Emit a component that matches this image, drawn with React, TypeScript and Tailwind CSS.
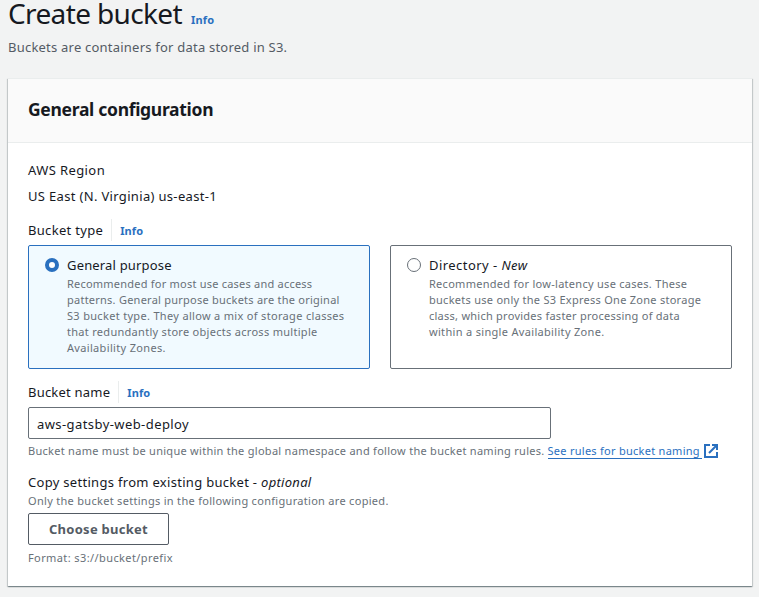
import React from "react";

function Info() {
  return <a className="text-[11px] leading-4 font-bold tracking-[0.15px] text-[#2a70bf]">Info</a>;
}

function Label({ children }: { children: React.ReactNode }) {
  return (
    <div className="flex h-[22px] items-center">
      {children}
      <span className="ml-2 flex h-[22px] items-center border-l border-[#eaeded] pt-0.5 pl-2">
        <Info />
      </span>
    </div>
  );
}

function ExternalIcon() {
  return (
    <svg className="mt-px ml-[2px] size-[14px] shrink-0" viewBox="0 0 14 14" fill="none" stroke="#2a70bf" strokeWidth="2">
      <path d="M6 1H1v12h12V8" />
      <path d="M8 1h5v5M13 1 5 9" />
    </svg>
  );
}

export default function App() {
  return (
    <div className="h-[597px] w-[759px] bg-[#f2f3f3] px-2 font-['Noto_Sans',sans-serif] text-[13px] leading-[22px] text-[#16191f]">
      <header className="h-[78px]">
        <div className="flex h-[30px] items-baseline gap-[9px]">
          <h1 className="text-[28px] leading-[27px] tracking-[-0.63px]">Create bucket</h1>
          <Info />
        </div>
        <p className="mt-[6px] tracking-[0.22px] text-[#545b64]">Buckets are containers for data stored in S3.</p>
      </header>
      <main className="h-[508px] w-[744px] border-t border-[#eaeded] bg-white shadow-[0_1px_1px_0_rgba(0,28,36,0.3),1px_1px_1px_0_rgba(0,28,36,0.15),-1px_1px_1px_0_rgba(0,28,36,0.15)]">
        <div className="flex h-16 items-center border-b border-[#eaeded] bg-[#fafafa] px-5 pb-[3px]">
          <h2 className="text-[17.5px] font-bold tracking-[-0.3px]">General configuration</h2>
        </div>
        <div className="px-5 pt-4">
          <div className="tracking-[0.4px]">AWS Region</div>
          <div className="mt-1 tracking-[0.33px]">US East (N. Virginia) us-east-1</div>
          <div className="mt-3">
            <Label><span className="tracking-[0.31px]">Bucket type</span></Label>
          </div>
          <div className="mt-1 flex gap-5">
            <div className="flex h-[124px] w-[342px] rounded-[2px] border border-[#2a70bf] bg-[#f1faff] px-4 py-2">
              <span className="mt-1 mr-2 size-[14px] shrink-0 rounded-full border-[4px] border-[#2a70bf] bg-white" />
              <div>
                <div className="tracking-[0.17px]">General purpose</div>
                <p className="text-[11px] leading-4 whitespace-nowrap text-[#687078]">
                  <span className="block tracking-[0.22px]">Recommended for most use cases and access</span>
                  <span className="block tracking-[0.24px]">patterns. General purpose buckets are the original</span>
                  <span className="block tracking-[0.32px]">S3 bucket type. They allow a mix of storage classes</span>
                  <span className="block tracking-[0.29px]">that redundantly store objects across multiple</span>
                  <span className="block tracking-[0.33px]">Availability Zones.</span>
                </p>
              </div>
            </div>
            <div className="flex h-[124px] w-[342px] rounded-[2px] border border-[#687078] px-4 py-2">
              <span className="mt-1 mr-2 size-[14px] shrink-0 rounded-full border border-[#687078] bg-white" />
              <div>
                <div className="tracking-[0.45px]">Directory - <i>New</i></div>
                <p className="text-[11px] leading-4 whitespace-nowrap text-[#687078]">
                  <span className="block tracking-[0.28px]">Recommended for low-latency use cases. These</span>
                  <span className="block tracking-[0.27px]">buckets use only the S3 Express One Zone storage</span>
                  <span className="block tracking-[0.25px]">class, which provides faster processing of data</span>
                  <span className="block tracking-[0.32px]">within a single Availability Zone.</span>
                </p>
              </div>
            </div>
          </div>
          <div className="mt-3">
            <Label><span className="tracking-[0.21px]">Bucket name</span></Label>
          </div>
          <input className="mt-1 block h-8 w-[523px] rounded-[2px] border border-[#687078] px-2 pt-0.5 text-[13px] tracking-[0.42px]" defaultValue="aws-gatsby-web-deploy" />
          <div className="mt-1 flex h-4 text-[11px] leading-4 whitespace-nowrap text-[#687078]">
            <span className="w-[519.5px] tracking-[0.28px]">Bucket name must be unique within the global namespace and follow the bucket naming rules.</span>
            <a className="flex text-[#2a70bf]">
              <span className="h-4 w-[154.5px] border-b border-[#2a70bf] tracking-[0.27px]">See rules for bucket naming</span>
              <ExternalIcon />
            </a>
          </div>
          <div className="mt-3 tracking-[0.3px]">Copy settings from existing bucket - <i>optional</i></div>
          <p className="text-[11px] leading-4 tracking-[0.3px] text-[#687078]">Only the bucket settings in the following configuration are copied.</p>
          <button className="mt-1 flex h-8 w-[141px] items-center justify-center rounded-[2px] border border-[#545b64] text-[13px] font-bold tracking-[0.27px] text-[#545b64]">Choose bucket</button>
          <p className="mt-[5px] text-[11px] leading-4 tracking-[0.4px] text-[#687078]">Format: s3://bucket/prefix</p>
        </div>
      </main>
    </div>
  );
}
